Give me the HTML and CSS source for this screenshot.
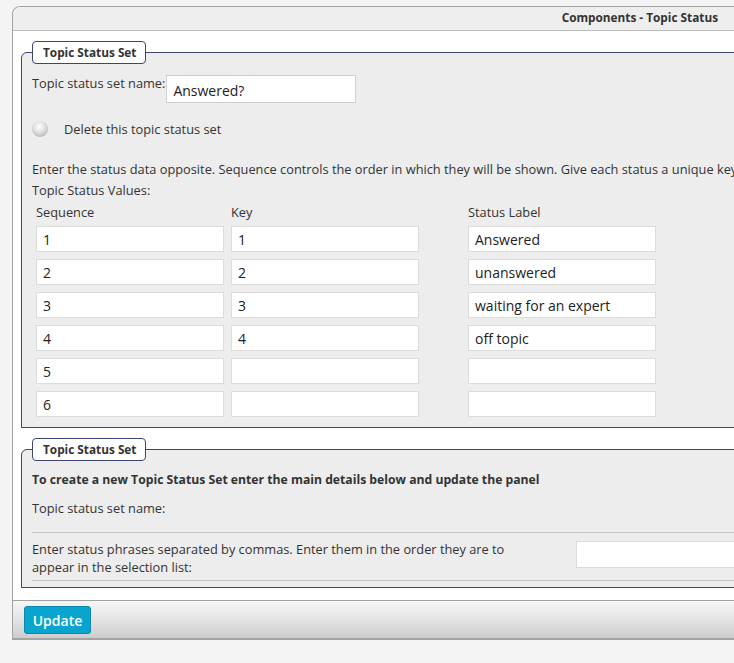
FILE: index.html
```html
<!DOCTYPE html>
<html>
<head>
<meta charset="utf-8">
<title>Components - Topic Status</title>
<link rel="stylesheet" href="styles.css">
</head>
<body>
<div class="panel">
  <div class="panel-head"><span class="panel-title">Components - Topic Status</span></div>
  <div class="panel-body">
    <fieldset class="set">
      <legend class="set-legend">Topic Status Set</legend>
      <div class="name-row">
        <label class="name-label">Topic status set name:</label>
        <input class="name-input" type="text" value="Answered?">
      </div>
      <div class="radio-row">
        <span class="radio"></span>
        <span class="radio-label">Delete this topic status set</span>
      </div>
      <p class="help">Enter the status data opposite. Sequence controls the order in which they will be shown. Give each status a unique key.</p>
      <p class="values-title">Topic Status Values:</p>
      <div class="grid">
        <div class="col-head">Sequence</div>
        <div class="col-head">Key</div>
        <div class="col-head">Status Label</div>

        <input class="cell" type="text" value="1">
        <input class="cell" type="text" value="1">
        <input class="cell" type="text" value="Answered">

        <input class="cell" type="text" value="2">
        <input class="cell" type="text" value="2">
        <input class="cell" type="text" value="unanswered">

        <input class="cell" type="text" value="3">
        <input class="cell" type="text" value="3">
        <input class="cell" type="text" value="waiting for an expert">

        <input class="cell" type="text" value="4">
        <input class="cell" type="text" value="4">
        <input class="cell" type="text" value="off topic">

        <input class="cell" type="text" value="5">
        <input class="cell" type="text" value="">
        <input class="cell" type="text" value="">

        <input class="cell" type="text" value="6">
        <input class="cell" type="text" value="">
        <input class="cell" type="text" value="">
      </div>
    </fieldset>

    <fieldset class="set set-new">
      <legend class="set-legend">Topic Status Set</legend>
      <p class="new-intro">To create a new Topic Status Set enter the main details below and update the panel</p>
      <p class="new-name">Topic status set name:</p>
      <div class="phrase-row">
        <p class="phrase-label">Enter status phrases separated by commas. Enter them in the order they are to appear in the selection list:</p>
        <input class="phrase-input" type="text" value="">
      </div>
    </fieldset>
  </div>
  <div class="panel-foot">
    <button class="btn-update" type="button">Update</button>
  </div>
</div>
</body>
</html>
```

FILE: styles.css
```css
html, body {
  margin: 0;
  padding: 0;
  overflow: hidden;
}
body {
  background: #f4f4f4;
  font-family: "Open Sans", "DejaVu Sans", sans-serif;
  font-size: 12.8px;
  color: #333;
}
.panel {
  margin: 6px 0 0 12px;
  width: 800px;
  border: 1px solid #a3a3a3;
  border-bottom-width: 2px;
  border-radius: 8px 8px 0 0;
  background: #fff;
}
.panel-head {
  height: 24px;
  background: #eeeeee;
  border-bottom: 1px solid #bdbdbd;
  border-radius: 8px 8px 0 0;
  display: flex;
  justify-content: flex-end;
  align-items: flex-start;
  padding-right: 95px;
  box-sizing: border-box;
  padding-top: 2px;
}
.panel-title {
  font-weight: bold;
  font-size: 11.8px;
  line-height: 16px;
  color: #333;
}
.panel-body {
  padding: 10px 0 12px 8px;
}
.set {
  margin: 0;
  border: 1px solid #3d4672;
  border-radius: 6px 0 0 0;
  background: #ededed;
  padding: 0 10px 10px 10px;
}
.set-new {
  margin-top: 10px;
  padding-bottom: 6px;
}
.set-legend {
  padding: 0 9px 0 10px;
  height: 21px;
  line-height: 20px;
  border: 1px solid #3d4672;
  border-radius: 4px;
  background: #fff;
  font-weight: bold;
  font-size: 11.8px;
  color: #333;
  box-sizing: content-box;
}
.name-row {
  display: flex;
  align-items: flex-start;
  margin-top: 11px;
}
.name-label {
  line-height: 16px;
  padding-top: 0;
}
.name-input {
  margin: 0 0 0 1px;
  width: 190px;
  height: 28px;
  box-sizing: border-box;
  border: 1px solid #cfcfcf;
  background: #fff;
  font-family: "Open Sans", "DejaVu Sans", sans-serif;
  font-size: 14px;
  color: #222;
  padding: 2px 6px 0 6px;
  outline: none;
}
.radio-row {
  display: flex;
  align-items: center;
  margin-top: 18px;
  height: 16px;
}
.radio {
  width: 16px;
  height: 16px;
  border-radius: 50%;
  background: radial-gradient(circle at 45% 35%, #ffffff 0%, #e6e6e6 35%, #bdbdbd 75%, #d5d5d5 100%);
  margin-right: 16px;
}
.radio-label {
  line-height: 16px;
}
.help {
  margin: 22px 0 0 0;
  line-height: 21px;
  white-space: nowrap;
}
.values-title {
  margin: 0;
  line-height: 21px;
}
.grid {
  display: grid;
  grid-template-columns: 195px 237px 188px;
  row-gap: 7px;
  padding-left: 4px;
}
.col-head {
  line-height: 22px;
  margin-bottom: -7px;
  padding-bottom: 3px;
}
.cell {
  margin: 0;
  width: 188px;
  height: 26px;
  box-sizing: border-box;
  border: 1px solid #dcdcdc;
  background: #fff;
  font-family: "Open Sans", "DejaVu Sans", sans-serif;
  font-size: 14px;
  color: #222;
  padding: 0 6px 0 6px;
  outline: none;
}
.new-intro {
  margin: 8px 0 0 0;
  font-weight: bold;
  font-size: 12.2px;
  line-height: 21px;
}
.new-name {
  margin: 8px 0 0 0;
  line-height: 21px;
}
.phrase-row {
  display: flex;
  align-items: flex-start;
  margin-top: 13px;
  border-top: 1px solid #c6c6c6;
  border-bottom: 1px solid #c6c6c6;
  padding: 7px 0 4px 0;
}
.phrase-label {
  margin: 0;
  width: 505px;
  line-height: 18px;
}
.phrase-input {
  margin: 1px 0 0 39px;
  width: 240px;
  height: 27px;
  box-sizing: border-box;
  border: 1px solid #dcdcdc;
  background: #fff;
  outline: none;
}
.panel-foot {
  border-top: 1px solid #a3a3a3;
  background: linear-gradient(#f6f6f6, #e8e8e8 40%, #cdcdcd);
  height: 38px;
  padding: 5px 0 0 11px;
  box-sizing: border-box;
}
.btn-update {
  margin: 0;
  width: 67px;
  height: 28px;
  background: #0aa5cf;
  border: 1px solid #0a87aa;
  border-radius: 3px;
  color: #fff;
  font-family: "Open Sans", "DejaVu Sans", sans-serif;
  font-weight: 600;
  font-size: 14px;
  padding: 0;
}
```
